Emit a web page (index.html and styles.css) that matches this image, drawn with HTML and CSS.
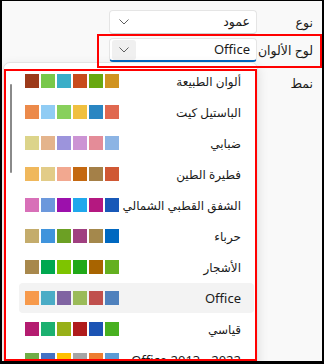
FILE: index.html
```html
<!DOCTYPE html>
<html lang="ar" dir="rtl">
<head>
    <meta charset="UTF-8">
    <meta name="viewport" content="width=device-width, initial-scale=1.0">
    <title>لوح الألوان</title>
    <link rel="stylesheet" href="styles.css">
</head>
<body>
<div class="frame">

    <!-- Chart settings -->
    <div class="row row-type">
        <span class="label">نوع</span>
        <div class="combo">
            <span class="combo-text">عمود</span>
            <span class="chevron">
                <svg width="10" height="6" viewBox="0 0 10 6"><path d="M0.5 0.5 L5 5 L9.5 0.5" fill="none" stroke="#5f5f5f" stroke-width="1"/></svg>
            </span>
        </div>
    </div>

    <div class="row row-palette">
        <span class="label">لوح الألوان</span>
        <div class="combo combo-open">
            <span class="combo-text latin">Office</span>
            <span class="chevron chevron-btn">
                <svg width="10" height="6" viewBox="0 0 10 6"><path d="M0.5 0.5 L5 5 L9.5 0.5" fill="none" stroke="#5f5f5f" stroke-width="1"/></svg>
            </span>
        </div>
    </div>

    <div class="row row-style">
        <span class="label">نمط</span>
    </div>

    <!-- Palette dropdown -->
    <div class="popup">
        <div class="scrollbar"></div>
        <ul class="palette-list" id="palette-list"></ul>
    </div>

    <div class="mark mark-palette"></div>
    <div class="mark mark-list"></div>
</div>

<script>
  var palettes = [
    ["ألوان الطبيعة", ["#9c3a1a", "#78c84a", "#3aaec8", "#c84b1c", "#68a810", "#d09320"]],
    ["الباستيل كيت", ["#ec8a4a", "#90ccf4", "#88d05c", "#f0c040", "#2a86c2", "#e06850"]],
    ["ضبابي", ["#dcd48a", "#e4b48c", "#9c94dc", "#cc94d4", "#e48c98", "#8cb4e4"]],
    ["فطيرة الطين", ["#f0b85c", "#e2cc88", "#f2a890", "#c46810", "#a48048", "#d05834"]],
    ["الشفق القطبي الشمالي", ["#d870b8", "#6c98dc", "#9c10ac", "#20a8ec", "#b41880", "#1858b8"]],
    ["حرباء", ["#c4ac6c", "#4094dc", "#6ca024", "#a04080", "#a4884c", "#0068c0"]],
    ["الأشجار", ["#a8884c", "#00a850", "#7ec400", "#20a818", "#a86400", "#64b020"]],
    ["Office", ["#f79a4c", "#4bacc6", "#8064a2", "#9bbb59", "#c0504d", "#4f81bd"]],
    ["قياسي", ["#b41c70", "#1cb070", "#98b018", "#b01c1c", "#1c54b4", "#48b020"]],
    ["Office 2013 - 2022", ["#70ad47", "#4472c4", "#ffc000", "#a5a5a5", "#ed7d31", "#5b9bd5"]]
  ];

  var list = document.getElementById("palette-list");
  palettes.forEach(function(p) {
    var li = document.createElement("li");
    li.className = "palette-item" + (p[0] === "Office" ? " selected" : "");

    var name = document.createElement("span");
    name.className = "palette-name";
    if (/^[A-Za-z]/.test(p[0])) name.className += " latin";
    name.textContent = p[0];
    li.appendChild(name);

    // colours are listed left to right
    var swatches = document.createElement("span");
    swatches.className = "swatches";
    p[1].forEach(function(c) {
      var s = document.createElement("span");
      s.className = "swatch";
      s.style.backgroundColor = c;
      swatches.appendChild(s);
    });
    li.appendChild(swatches);
    list.appendChild(li);
  });
</script>
</body>
</html>
```

FILE: styles.css
```css
* {
    margin: 0;
    padding: 0;
    box-sizing: border-box;
}

body {
    font-family: "Segoe UI", "Noto Sans", "DejaVu Sans", sans-serif;
    font-size: 14px;
    color: #1b1b1b;
    background-color: #f9f9f9;
}

.frame {
    position: relative;
    width: 324px;
    height: 364px;
    overflow: hidden;
    background-color: #f9f9f9;
    border-top: 1px solid #000;
    border-left: 2px solid #000;
    border-right: 2px solid #000;
    border-bottom: 3px solid #000;
    padding-top: 9px;
}

.row {
    display: flex;
    align-items: center;
    height: 24px;
    margin-bottom: 4px;
}

.label {
    width: 65px;
    padding-right: 9px;
    white-space: nowrap;
    font-size: 12.5px;
}

.row-style {
    align-items: flex-start;
    padding-top: 9px;
}

.combo {
    width: 148px;
    height: 24px;
    display: flex;
    align-items: center;
    justify-content: space-between;
    background-color: #fff;
    border: 1px solid #e5e5e5;
    border-bottom-color: #d0d0d0;
    border-radius: 4px;
    padding: 0 6px 0 2px;
}

.combo-text {
    font-size: 12.5px;
    line-height: 1;
}

.combo-text.latin {
    font-size: 13px;
}

.combo-open {
    border-bottom: 2px solid #0067c0;
}

.chevron {
    width: 24px;
    height: 20px;
    display: flex;
    align-items: center;
    justify-content: center;
}

.chevron-btn {
    background-color: #f0f0f0;
    border-radius: 3px;
}

/* dropdown */
.popup {
    position: absolute;
    left: 1px;
    top: 61px;
    width: 255px;
    height: 320px;
    background-color: #fff;
    border: 1px solid #e3e3e3;
    border-radius: 7px;
    box-shadow: 0 4px 12px rgba(0, 0, 0, 0.12);
    padding: 3px 3px 0 0;
}

.scrollbar {
    position: absolute;
    left: 6px;
    top: 21px;
    width: 2px;
    height: 89px;
    background-color: #8a8a8a;
    border-radius: 1px;
}

.palette-list {
    list-style: none;
}

.palette-item {
    width: 235px;
    height: 30px;
    margin-bottom: 1px;
    display: flex;
    align-items: center;
    justify-content: space-between;
    padding: 0 13px 0 6px;
    border-radius: 4px;
}

.palette-item.selected {
    background-color: #f3f3f3;
}

.palette-name {
    font-size: 12px;
    white-space: nowrap;
}

.palette-name.latin {
    font-size: 13px;
}

.swatches {
    display: flex;
    direction: ltr;
    gap: 2px;
}

.swatch {
    width: 14px;
    height: 14px;
}

/* annotation boxes */
.mark {
    position: absolute;
    border: 2px solid #f00;
}

.mark-palette {
    left: 95px;
    top: 33px;
    width: 225px;
    height: 34px;
}

.mark-list {
    left: 2px;
    top: 68px;
    width: 253px;
    height: 292px;
}
```
